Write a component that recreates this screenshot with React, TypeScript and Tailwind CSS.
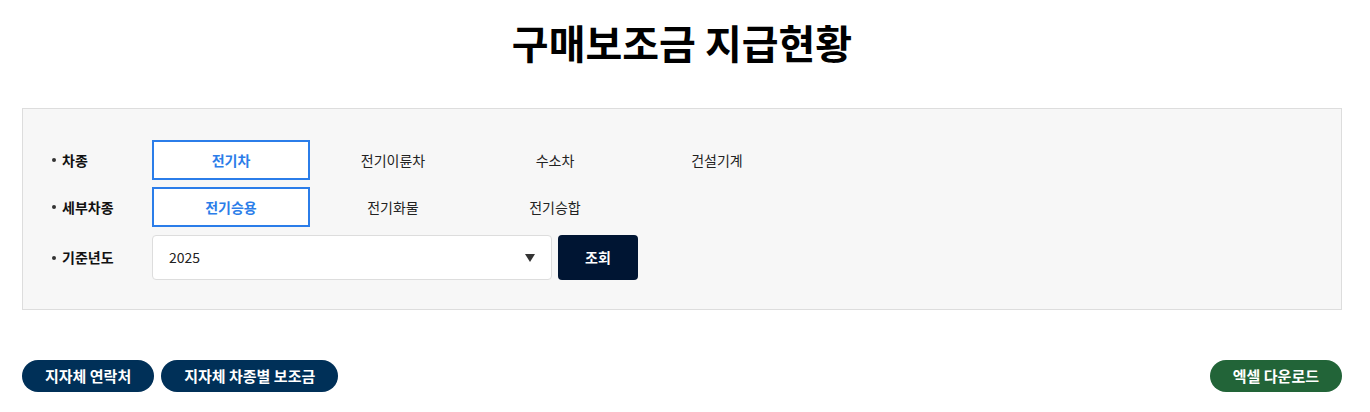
import React, { useState } from "react";

const font = { fontFamily: '"Noto Sans CJK KR", "Noto Sans", sans-serif' };

const kinds = ["전기차", "전기이륜차", "수소차", "건설기계"];
const subKinds = ["전기승용", "전기화물", "전기승합"];

const Label = ({ children }: { children: React.ReactNode }) => (
  <div className="flex w-[100px] shrink-0 items-center gap-[6px] text-[14px] font-bold text-[#111]">
    <span className="h-[4px] w-[4px] rounded-full bg-[#333]" />
    {children}
  </div>
);

const Options = ({
  items,
  active,
  onPick,
}: {
  items: string[];
  active: number;
  onPick: (i: number) => void;
}) => (
  <div className="flex gap-[4px]">
    {items.map((item, i) => (
      <button
        key={item}
        onClick={() => onPick(i)}
        className={`flex h-[40px] w-[158px] items-center justify-center text-[14px] ${
          i === active
            ? "border-2 border-[#2b7de9] bg-white font-bold text-[#2b7de9]"
            : "text-[#222]"
        }`}
      >
        {item}
      </button>
    ))}
  </div>
);

export default function App() {
  const [kind, setKind] = useState(0);
  const [sub, setSub] = useState(0);

  return (
    <div className="min-h-[412px] bg-white pl-[22px]" style={font}>
      <div className="w-[1320px]">
        <h1 className="pt-[16px] text-center text-[40px] leading-[52px] font-bold text-black">
          구매보조금 지급현황
        </h1>

        <div className="mt-[40px] flex flex-col border border-[#dddddd] bg-[#f7f7f7] pt-[31px] pr-[29px] pb-[29px] pl-[29px]">
          <div className="flex items-center">
            <Label>차종</Label>
            <Options items={kinds} active={kind} onPick={setKind} />
          </div>
          <div className="mt-[7px] flex items-center">
            <Label>세부차종</Label>
            <Options items={subKinds} active={sub} onPick={setSub} />
          </div>
          <div className="mt-[8px] flex items-center">
            <Label>기준년도</Label>
            <div className="flex h-[45px] w-[400px] items-center justify-between rounded-[4px] border border-[#dddddd] bg-white pr-[16px] pl-[16px] text-[14px] text-[#222]">
              <span>2025</span>
              <svg width="10" height="8" viewBox="0 0 10 8">
                <path d="M0 0h10L5 8z" fill="#333" />
              </svg>
            </div>
            <button className="ml-[6px] h-[45px] w-[80px] rounded-[4px] bg-[#001533] text-[14px] font-bold text-white">
              조회
            </button>
          </div>
        </div>

        <div className="mt-[50px] flex items-center justify-between">
          <div className="flex gap-[7px]">
            <button className="h-[32px] rounded-full bg-[#003058] px-[23px] text-[15px] font-bold text-white">
              지자체 연락처
            </button>
            <button className="h-[32px] rounded-full bg-[#003058] px-[23px] text-[15px] font-bold text-white">
              지자체 차종별 보조금
            </button>
          </div>
          <button className="h-[32px] rounded-full bg-[#226438] px-[23px] text-[15px] font-bold text-white">
            엑셀 다운로드
          </button>
        </div>
      </div>
    </div>
  );
}
